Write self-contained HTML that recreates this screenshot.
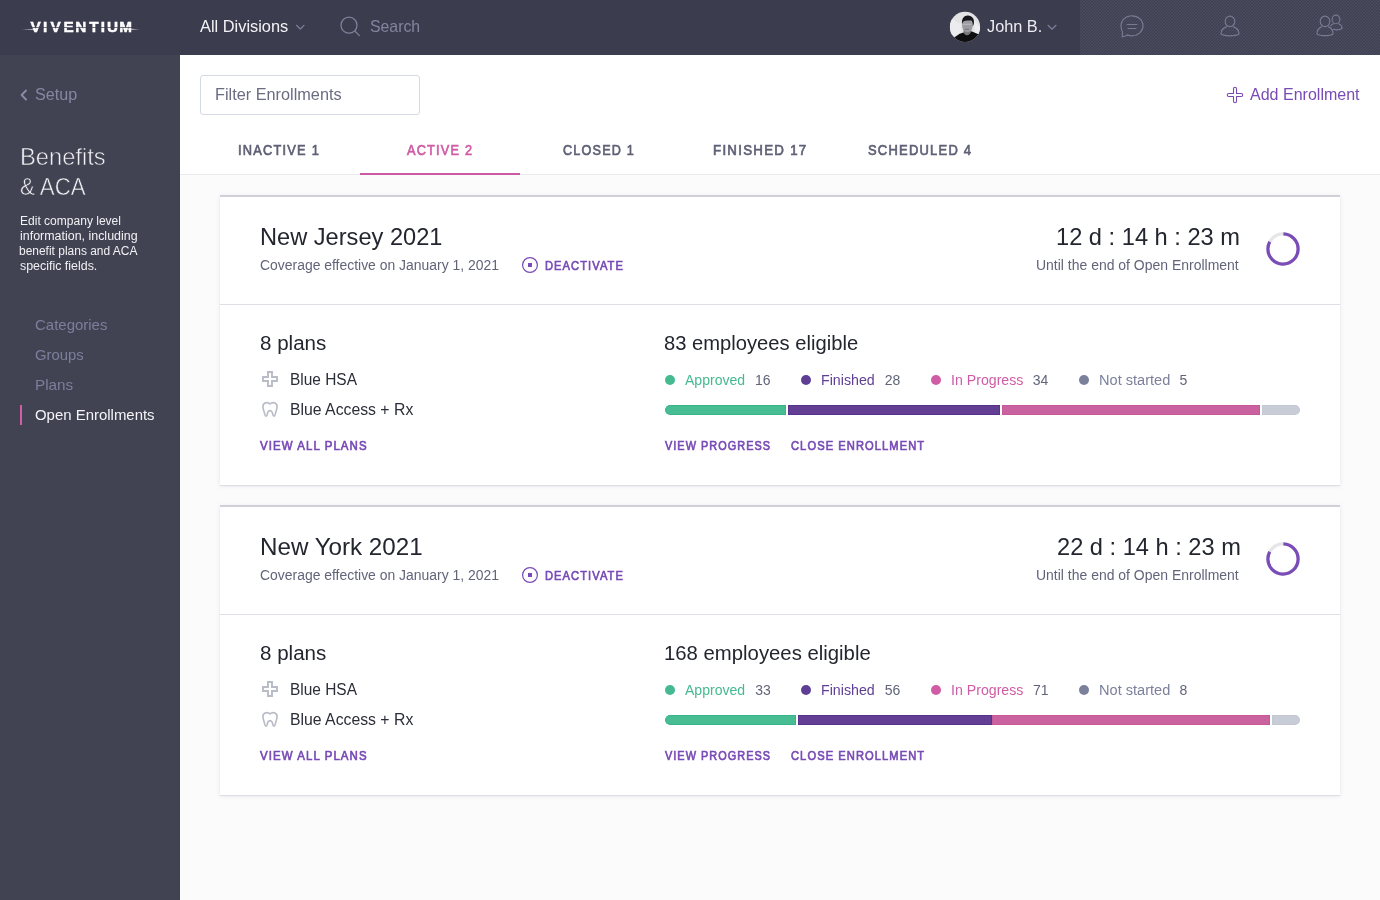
<!DOCTYPE html><html><head><meta charset="utf-8"><title>Open Enrollments</title><style>
*{box-sizing:border-box}
html,body{margin:0;padding:0}
body{width:1380px;height:900px;overflow:hidden;position:relative;background:#fbfbfc;font-family:"Liberation Sans",sans-serif}
.t{position:absolute;white-space:pre;line-height:1;font-family:"Liberation Sans",sans-serif;display:inline-block;transform-origin:0 0}
.abs{position:absolute}
#hdr{left:0;top:0;width:1380px;height:55px;background:#3c3c4f}
#hdrR{left:1080px;top:0;width:300px;height:55px;background:#414253}
#side{left:0;top:55px;width:180px;height:845px;background:#424352}
#topw{left:180px;top:55px;width:1200px;height:120px;background:#fff;border-bottom:1px solid #ebebef}
#filterbox{left:200px;top:75px;width:220px;height:40px;border:1px solid #d4d9e3;border-radius:3px;background:#fff}
#tabline{left:360px;top:173px;width:160px;height:2px;background:#cc59a3}
#navbar{left:20px;top:405px;width:2px;height:20px;background:#d05fa8}
.card{left:220px;width:1120px;height:290px;background:#fff;border-top:2px solid #d0d0d8;box-shadow:0 1px 1px rgba(30,30,60,.09),0 1px 5px rgba(30,30,60,.08)}
.divd{left:220px;width:1120px;height:1px;background:#dfdfe5}
.dot{width:10px;height:10px;border-radius:50%}
.seg{height:10px}
</style></head><body>
<div class="abs" id="hdr"></div><div class="abs" id="hdrR"><svg width="300" height="55" shape-rendering="crispEdges" style="display:block"><defs><pattern id="dg" width="3" height="3" patternUnits="userSpaceOnUse"><rect x="0" y="2" width="1" height="1" fill="#4c4d61"/><rect x="1" y="1" width="1" height="1" fill="#4c4d61"/><rect x="2" y="0" width="1" height="1" fill="#4c4d61"/></pattern></defs><rect width="300" height="55" fill="url(#dg)"/></svg></div><div class="abs" id="side"></div><div class="abs" id="topw"></div>
<div class="abs" id="filterbox"></div><div class="abs" id="tabline"></div><div class="abs" id="navbar"></div>
<svg class="abs" style="left:0;top:0;will-change:transform" width="180" height="55" viewBox="0 0 180 55">
<defs><linearGradient id="lgl" x1="0" x2="1"><stop offset="0" stop-color="#fff" stop-opacity="0"/><stop offset=".35" stop-color="#fff" stop-opacity=".75"/><stop offset="1" stop-color="#fff" stop-opacity=".95"/></linearGradient>
<linearGradient id="lgr" x1="0" x2="1"><stop offset="0" stop-color="#fff" stop-opacity=".95"/><stop offset=".6" stop-color="#fff" stop-opacity=".6"/><stop offset="1" stop-color="#fff" stop-opacity="0"/></linearGradient></defs>
<text y="31.8" x="30.4 42.95 50.4 63.6 75.3 89.3 100.75 106.9 119.3" font-family="Liberation Sans" font-weight="700" font-size="15.3" fill="#fff" stroke="#fff" stroke-width=".45">VIVENTIUM</text>
<rect x="29" y="27.1" width="104" height="0.9" fill="#3c3c4f" opacity=".8"/>
<path d="M20 29.9 L37.5 28.6 L37.5 29.6 Z" fill="url(#lgl)"/>
<path d="M128 28.6 L141.5 29.6 L128 29.7 Z" fill="url(#lgr)"/>
</svg>
<svg class="abs" style="left:0;top:0" width="1380" height="55" viewBox="0 0 1380 55" fill="none" stroke-linecap="round" stroke-linejoin="round">
<path d="M296.5 25.3 L300.3 29 L304 25.3" stroke="#7c7e98" stroke-width="1.2"/>
<circle cx="349" cy="25.2" r="8" stroke="#7e809a" stroke-width="1.3"/><path d="M354.8 31 L359.4 35.6" stroke="#7e809a" stroke-width="1.3"/>
<path d="M1048 25.3 L1052 29.2 L1056 25.3" stroke="#7c7e98" stroke-width="1.2"/>
<g stroke="#787a94" stroke-width="1.15">
<path d="M1132 15.8 C1138.2 15.8 1143 20.2 1143 25.8 C1143 31.4 1138.2 35.8 1132 35.8 C1130.3 35.8 1128.7 35.5 1127.3 34.9 C1125.8 35.9 1124 36.6 1122.2 36.8 L1122.6 32.2 C1121.5 30.4 1121 28.2 1121 25.8 C1121 20.2 1125.8 15.8 1132 15.8 Z"/>
<path d="M1127 24.5 H1137 M1128 28.5 H1136"/>
<ellipse cx="1230" cy="21.4" rx="4.8" ry="5.3"/>
<path d="M1226.5 26.9 C1223 28 1221 31 1221 34 C1224 36.4 1236 36.4 1239 34 C1239 31 1237 28 1233.5 26.9"/>
<ellipse cx="1325" cy="21.4" rx="4.8" ry="5.3"/>
<path d="M1321.5 26.9 C1318.5 28 1317 31 1317 34 C1320 36.2 1330 36.2 1333 34 C1333 31 1331.5 28 1328.5 26.9"/>
<ellipse cx="1336" cy="19.4" rx="3.9" ry="4.3"/>
<path d="M1333.3 23.8 C1332.2 24.3 1331.3 25 1330.6 26 M1333.5 29.4 C1336 30 1340 29.8 1342 28.6 C1342 26.6 1340.8 24.6 1338.7 23.8"/>
</g></svg>
<svg class="abs" style="left:949px;top:11px" width="32" height="32" viewBox="-1 -1 32 32">
<defs><clipPath id="av"><circle cx="15" cy="14.9" r="15.1"/></clipPath></defs>
<g clip-path="url(#av)"><rect x="-1" y="-1" width="32" height="32" fill="#e3e3e6"/>
<path d="M0 8 C4 6 7 12 11 11 L11 20 L5 24 L0 22 Z" fill="#ececee"/>
<path d="M24 8 C26 10 28 14 30 15 L30 22 L25 21 Z" fill="#eeeef0"/>
<rect x="13.6" y="17" width="7.6" height="9" fill="#77777c"/>
<ellipse cx="17.4" cy="13.6" rx="5.3" ry="6.6" fill="#9b9ba1"/>
<path d="M13 12.2 H21.5" stroke="#bdbdc2" stroke-width="1.1" fill="none"/>
<path d="M14.5 17.3 H19" stroke="#6f6f75" stroke-width=".9" fill="none"/>
<path d="M12.1 12.6 C11.2 6.2 14.4 3.4 18 3.6 C22.3 3.9 24.6 7.2 23.9 11.6 C23.7 12.8 23.3 13.6 22.7 14.2 C22.9 11.4 22.3 9.4 21 8.6 C18.6 8.4 15 8.2 13.4 9.6 C12.7 10.4 12.4 11.4 12.1 12.6 Z" fill="#17171b"/>
<path d="M-1 31 L-1 28.5 L4.2 25.6 L9.7 21.7 L13.6 20.6 C14.8 24.2 19.6 24.4 21.4 19.2 L28.4 22.3 L31 24 L31 31 Z" fill="#0e0e11"/>
</g></svg>
<svg class="abs" style="left:0;top:55px" width="180" height="100" viewBox="0 55 180 100" fill="none"><path d="M26 90.5 L21.6 95 L26 99.5" stroke="#8a8ca6" stroke-width="1.9" stroke-linecap="round" stroke-linejoin="round"/></svg>
<svg class="abs" style="left:1226px;top:86px" width="18" height="18" viewBox="0 0 18 18" fill="none"><path d="M7.5 2.8 A1.5 1.5 0 0 1 10.5 2.8 V7.5 H15.2 A1.5 1.5 0 0 1 15.2 10.5 H10.5 V15.2 A1.5 1.5 0 0 1 7.5 15.2 V10.5 H2.8 A1.5 1.5 0 0 1 2.8 7.5 H7.5 Z" stroke="#774ab5" stroke-width="1.1" stroke-linejoin="round"/></svg>
<div class="abs card" style="top:195px"></div><div class="abs divd" style="top:304px"></div>
<svg class="abs" style="left:521px;top:256px" width="18" height="18" viewBox="0 0 18 18"><circle cx="9" cy="9" r="7.4" fill="none" stroke="#784bb6" stroke-width="1.2"/><rect x="7" y="7" width="4" height="4" fill="#784bb6"/></svg>
<svg class="abs" style="left:1263px;top:229px" width="40" height="40" viewBox="0 0 40 40" fill="none"><circle cx="20" cy="20" r="15.1" stroke="#e6e6e8" stroke-width="3.2"/><circle cx="20" cy="20" r="15.1" stroke="#7a4cb8" stroke-width="3.2" stroke-dasharray="77.8 100" transform="rotate(-88.5 20 20)"/></svg>
<svg class="abs" style="left:261px;top:370px" width="18" height="18" viewBox="0 0 18 18" fill="none"><path d="M7 2 H11 V7 H16 V11 H11 V16 H7 V11 H2 V7 H7 Z" stroke="#b9bbc6" stroke-width="1.9"/></svg>
<svg class="abs" style="left:261px;top:400px" width="18" height="19" viewBox="0 0 18 19" fill="none"><path d="M9 3.9 C7.6 2.6 5.6 2.3 4 3 C2.3 3.8 1.7 5.6 2 7.6 C2.3 9.6 3 11 3.4 12.8 C3.7 14.2 4 16.2 5.1 16.2 C6.3 16.2 6.2 14.2 6.6 12.8 C7 11.4 7.8 10.6 9 10.6 C10.2 10.6 11 11.4 11.4 12.8 C11.8 14.2 11.7 16.2 12.9 16.2 C14 16.2 14.3 14.2 14.6 12.8 C15 11 15.7 9.6 16 7.6 C16.3 5.6 15.7 3.8 14 3 C12.4 2.3 10.4 2.6 9 3.9 Z" stroke="#b9bbc6" stroke-width="1.6" stroke-linejoin="round"/></svg>
<div class="abs dot" style="left:665px;top:375px;background:#45ba91"></div>
<div class="abs dot" style="left:801px;top:375px;background:#5f3f96"></div>
<div class="abs dot" style="left:931px;top:375px;background:#cf5ca5"></div>
<div class="abs dot" style="left:1079px;top:375px;background:#7b809b"></div>
<div class="abs" style="left:665px;top:405px;width:635px;height:10px;border-radius:5px;overflow:hidden;background:#fff">
<div class="abs seg" style="left:0px;top:0;width:121px;border-radius:5px 0 0 5px;background:#48bd94;box-shadow:inset 0 0 0 1px #36b688"></div>
<div class="abs seg" style="left:123px;top:0;width:212px;background:#633f94;box-shadow:inset 0 0 0 1px #57318c"></div>
<div class="abs seg" style="left:337px;top:0;width:258px;background:#cb62a0;box-shadow:inset 0 0 0 1px #c8589c"></div>
<div class="abs seg" style="left:597px;top:0;width:38px;border-radius:0 5px 5px 0;background:#c8ccd6;box-shadow:inset 0 0 0 1px #c4c8d2"></div>
</div>
<div class="abs card" style="top:505px"></div><div class="abs divd" style="top:614px"></div>
<svg class="abs" style="left:521px;top:566px" width="18" height="18" viewBox="0 0 18 18"><circle cx="9" cy="9" r="7.4" fill="none" stroke="#784bb6" stroke-width="1.2"/><rect x="7" y="7" width="4" height="4" fill="#784bb6"/></svg>
<svg class="abs" style="left:1263px;top:539px" width="40" height="40" viewBox="0 0 40 40" fill="none"><circle cx="20" cy="20" r="15.1" stroke="#e6e6e8" stroke-width="3.2"/><circle cx="20" cy="20" r="15.1" stroke="#7a4cb8" stroke-width="3.2" stroke-dasharray="77.8 100" transform="rotate(-88.5 20 20)"/></svg>
<svg class="abs" style="left:261px;top:680px" width="18" height="18" viewBox="0 0 18 18" fill="none"><path d="M7 2 H11 V7 H16 V11 H11 V16 H7 V11 H2 V7 H7 Z" stroke="#b9bbc6" stroke-width="1.9"/></svg>
<svg class="abs" style="left:261px;top:710px" width="18" height="19" viewBox="0 0 18 19" fill="none"><path d="M9 3.9 C7.6 2.6 5.6 2.3 4 3 C2.3 3.8 1.7 5.6 2 7.6 C2.3 9.6 3 11 3.4 12.8 C3.7 14.2 4 16.2 5.1 16.2 C6.3 16.2 6.2 14.2 6.6 12.8 C7 11.4 7.8 10.6 9 10.6 C10.2 10.6 11 11.4 11.4 12.8 C11.8 14.2 11.7 16.2 12.9 16.2 C14 16.2 14.3 14.2 14.6 12.8 C15 11 15.7 9.6 16 7.6 C16.3 5.6 15.7 3.8 14 3 C12.4 2.3 10.4 2.6 9 3.9 Z" stroke="#b9bbc6" stroke-width="1.6" stroke-linejoin="round"/></svg>
<div class="abs dot" style="left:665px;top:685px;background:#45ba91"></div>
<div class="abs dot" style="left:801px;top:685px;background:#5f3f96"></div>
<div class="abs dot" style="left:931px;top:685px;background:#cf5ca5"></div>
<div class="abs dot" style="left:1079px;top:685px;background:#7b809b"></div>
<div class="abs" style="left:665px;top:715px;width:635px;height:10px;border-radius:5px;overflow:hidden;background:#fff">
<div class="abs seg" style="left:0px;top:0;width:131px;border-radius:5px 0 0 5px;background:#48bd94;box-shadow:inset 0 0 0 1px #36b688"></div>
<div class="abs seg" style="left:133px;top:0;width:194px;background:#633f94;box-shadow:inset 0 0 0 1px #57318c"></div>
<div class="abs seg" style="left:327px;top:0;width:278px;background:#cb62a0;box-shadow:inset 0 0 0 1px #c8589c"></div>
<div class="abs seg" style="left:607px;top:0;width:28px;border-radius:0 5px 5px 0;background:#c8ccd6;box-shadow:inset 0 0 0 1px #c4c8d2"></div>
</div>
<div class="abs" style="left:0;top:0;width:1380px;height:900px;will-change:transform">
<span class="t" style="left:199.91px;top:18px;font-size:17px;font-weight:400;transform:scaleX(0.9634);color:#f2f2f6">All Divisions</span>
<span class="t" style="left:369.74px;top:18px;font-size:17px;font-weight:400;transform:scaleX(0.9313);color:#8385a0">Search</span>
<span class="t" style="left:987.22px;top:18px;font-size:17px;font-weight:400;transform:scaleX(0.9585);color:#ececf2">John B.</span>
<span class="t" style="left:34.64px;top:87px;font-size:16px;font-weight:400;transform:scaleX(1.0073);color:#8587a2">Setup</span>
<span class="t" style="left:19.56px;top:145px;font-size:24px;font-weight:400;transform:scaleX(0.9882);-webkit-text-stroke:0.55px #424352;color:#f0f0f4">Benefits</span>
<span class="t" style="left:20.06px;top:175px;font-size:24px;font-weight:400;transform:scaleX(0.9279);-webkit-text-stroke:0.55px #424352;color:#f0f0f4">&amp; ACA</span>
<span class="t" style="left:19.77px;top:215px;font-size:12px;font-weight:400;transform:scaleX(1.0027);color:#f1f1f5">Edit company level</span>
<span class="t" style="left:20.02px;top:230px;font-size:12px;font-weight:400;transform:scaleX(1.0369);color:#f1f1f5">information, including</span>
<span class="t" style="left:19.40px;top:245px;font-size:12px;font-weight:400;transform:scaleX(0.9972);color:#f1f1f5">benefit plans and ACA</span>
<span class="t" style="left:19.63px;top:260px;font-size:12px;font-weight:400;transform:scaleX(1.0348);color:#f1f1f5">specific fields.</span>
<span class="t" style="left:34.72px;top:317px;font-size:15px;font-weight:400;transform:scaleX(0.9986);color:#7b7f9c">Categories</span>
<span class="t" style="left:34.77px;top:347px;font-size:15px;font-weight:400;transform:scaleX(0.9922);color:#7b7f9c">Groups</span>
<span class="t" style="left:34.62px;top:377px;font-size:15px;font-weight:400;transform:scaleX(1.0166);color:#7b7f9c">Plans</span>
<span class="t" style="left:34.94px;top:407px;font-size:15px;font-weight:400;transform:scaleX(0.9960);color:#f4f4f8">Open Enrollments</span>
<span class="t" style="left:214.50px;top:86px;font-size:17px;font-weight:400;transform:scaleX(0.9575);color:#6b6c82">Filter Enrollments</span>
<span class="t" style="left:1250.04px;top:86px;font-size:17px;font-weight:400;transform:scaleX(0.9427);color:#784bb6">Add Enrollment</span>
<span class="t" style="left:238.00px;top:142px;font-size:15px;font-weight:400;transform:scaleX(0.8543);letter-spacing:1.43px;-webkit-text-stroke:0.7px #5f6076;color:#5f6076">INACTIVE 1</span>
<span class="t" style="left:406.92px;top:142px;font-size:15px;font-weight:400;transform:scaleX(0.8471);letter-spacing:1.43px;-webkit-text-stroke:0.7px #cf5ca5;color:#cf5ca5">ACTIVE 2</span>
<span class="t" style="left:563.07px;top:142px;font-size:15px;font-weight:400;transform:scaleX(0.8417);letter-spacing:1.43px;-webkit-text-stroke:0.7px #5f6076;color:#5f6076">CLOSED 1</span>
<span class="t" style="left:712.91px;top:142px;font-size:15px;font-weight:400;transform:scaleX(0.8865);letter-spacing:1.43px;-webkit-text-stroke:0.7px #5f6076;color:#5f6076">FINISHED 17</span>
<span class="t" style="left:867.89px;top:142px;font-size:15px;font-weight:400;transform:scaleX(0.8634);letter-spacing:1.43px;-webkit-text-stroke:0.7px #5f6076;color:#5f6076">SCHEDULED 4</span>
<span class="t" style="left:259.72px;top:225px;font-size:24px;font-weight:400;transform:scaleX(0.9839);color:#23262e">New Jersey 2021</span>
<span class="t" style="left:259.58px;top:258px;font-size:14px;font-weight:400;transform:scaleX(0.9947);color:#62647a">Coverage effective on January 1, 2021</span>
<span class="t" style="left:544.69px;top:259px;font-size:13px;font-weight:400;transform:scaleX(0.8572);letter-spacing:1.24px;-webkit-text-stroke:0.7px #784bb6;color:#784bb6">DEACTIVATE</span>
<span class="t" style="left:1056.34px;top:225px;font-size:24px;font-weight:400;transform:scaleX(0.9853);color:#23262e">12 d : 14 h : 23 m</span>
<span class="t" style="left:1036.41px;top:258px;font-size:14px;font-weight:400;transform:scaleX(0.9979);color:#62647a">Until the end of Open Enrollment</span>
<span class="t" style="left:259.85px;top:333px;font-size:20px;font-weight:400;transform:scaleX(1.0273);color:#23262e">8 plans</span>
<span class="t" style="left:289.63px;top:372px;font-size:16px;font-weight:400;transform:scaleX(0.9654);color:#2b2d38">Blue HSA</span>
<span class="t" style="left:289.62px;top:402px;font-size:16px;font-weight:400;transform:scaleX(0.9866);color:#2b2d38">Blue Access + Rx</span>
<span class="t" style="left:260.14px;top:439px;font-size:13px;font-weight:400;transform:scaleX(0.8794);letter-spacing:1.24px;-webkit-text-stroke:0.7px #784bb6;color:#784bb6">VIEW ALL PLANS</span>
<span class="t" style="left:664.20px;top:333px;font-size:20px;font-weight:400;transform:scaleX(1.0092);color:#23262e">83 employees eligible</span>
<span class="t" style="left:685.06px;top:373px;font-size:14px;font-weight:400;transform:scaleX(1.0037);color:#45ba91">Approved</span>
<span class="t" style="left:755.05px;top:373px;font-size:14px;font-weight:400;transform:scaleX(1.0000);color:#62647a">16</span>
<span class="t" style="left:820.92px;top:373px;font-size:14px;font-weight:400;transform:scaleX(1.0162);color:#5f3f96">Finished</span>
<span class="t" style="left:884.78px;top:373px;font-size:14px;font-weight:400;transform:scaleX(1.0000);color:#62647a">28</span>
<span class="t" style="left:950.74px;top:373px;font-size:14px;font-weight:400;transform:scaleX(1.0113);color:#cf5ca5">In Progress</span>
<span class="t" style="left:1032.71px;top:373px;font-size:14px;font-weight:400;transform:scaleX(1.0000);color:#62647a">34</span>
<span class="t" style="left:1098.77px;top:373px;font-size:14px;font-weight:400;transform:scaleX(1.0415);color:#7b809b">Not started</span>
<span class="t" style="left:1179.50px;top:373px;font-size:14px;font-weight:400;transform:scaleX(1.0000);color:#62647a">5</span>
<span class="t" style="left:665.14px;top:439px;font-size:13px;font-weight:400;transform:scaleX(0.8381);letter-spacing:1.24px;-webkit-text-stroke:0.7px #784bb6;color:#784bb6">VIEW PROGRESS</span>
<span class="t" style="left:791.35px;top:439px;font-size:13px;font-weight:400;transform:scaleX(0.8582);letter-spacing:1.24px;-webkit-text-stroke:0.7px #784bb6;color:#784bb6">CLOSE ENROLLMENT</span>
<span class="t" style="left:259.50px;top:535px;font-size:24px;font-weight:400;transform:scaleX(1.0074);color:#23262e">New York 2021</span>
<span class="t" style="left:259.58px;top:568px;font-size:14px;font-weight:400;transform:scaleX(0.9947);color:#62647a">Coverage effective on January 1, 2021</span>
<span class="t" style="left:544.69px;top:569px;font-size:13px;font-weight:400;transform:scaleX(0.8572);letter-spacing:1.24px;-webkit-text-stroke:0.7px #784bb6;color:#784bb6">DEACTIVATE</span>
<span class="t" style="left:1056.65px;top:535px;font-size:24px;font-weight:400;transform:scaleX(0.9842);color:#23262e">22 d : 14 h : 23 m</span>
<span class="t" style="left:1036.41px;top:568px;font-size:14px;font-weight:400;transform:scaleX(0.9979);color:#62647a">Until the end of Open Enrollment</span>
<span class="t" style="left:259.85px;top:643px;font-size:20px;font-weight:400;transform:scaleX(1.0273);color:#23262e">8 plans</span>
<span class="t" style="left:289.63px;top:682px;font-size:16px;font-weight:400;transform:scaleX(0.9654);color:#2b2d38">Blue HSA</span>
<span class="t" style="left:289.62px;top:712px;font-size:16px;font-weight:400;transform:scaleX(0.9866);color:#2b2d38">Blue Access + Rx</span>
<span class="t" style="left:260.14px;top:749px;font-size:13px;font-weight:400;transform:scaleX(0.8794);letter-spacing:1.24px;-webkit-text-stroke:0.7px #784bb6;color:#784bb6">VIEW ALL PLANS</span>
<span class="t" style="left:663.53px;top:643px;font-size:20px;font-weight:400;transform:scaleX(1.0159);color:#23262e">168 employees eligible</span>
<span class="t" style="left:685.06px;top:683px;font-size:14px;font-weight:400;transform:scaleX(1.0037);color:#45ba91">Approved</span>
<span class="t" style="left:755.20px;top:683px;font-size:14px;font-weight:400;transform:scaleX(1.0000);color:#62647a">33</span>
<span class="t" style="left:820.92px;top:683px;font-size:14px;font-weight:400;transform:scaleX(1.0162);color:#5f3f96">Finished</span>
<span class="t" style="left:884.69px;top:683px;font-size:14px;font-weight:400;transform:scaleX(1.0000);color:#62647a">56</span>
<span class="t" style="left:950.74px;top:683px;font-size:14px;font-weight:400;transform:scaleX(1.0113);color:#cf5ca5">In Progress</span>
<span class="t" style="left:1033.09px;top:683px;font-size:14px;font-weight:400;transform:scaleX(1.0000);color:#62647a">71</span>
<span class="t" style="left:1098.77px;top:683px;font-size:14px;font-weight:400;transform:scaleX(1.0415);color:#7b809b">Not started</span>
<span class="t" style="left:1179.53px;top:683px;font-size:14px;font-weight:400;transform:scaleX(1.0000);color:#62647a">8</span>
<span class="t" style="left:665.14px;top:749px;font-size:13px;font-weight:400;transform:scaleX(0.8381);letter-spacing:1.24px;-webkit-text-stroke:0.7px #784bb6;color:#784bb6">VIEW PROGRESS</span>
<span class="t" style="left:791.35px;top:749px;font-size:13px;font-weight:400;transform:scaleX(0.8582);letter-spacing:1.24px;-webkit-text-stroke:0.7px #784bb6;color:#784bb6">CLOSE ENROLLMENT</span>
</div>
</body></html>
